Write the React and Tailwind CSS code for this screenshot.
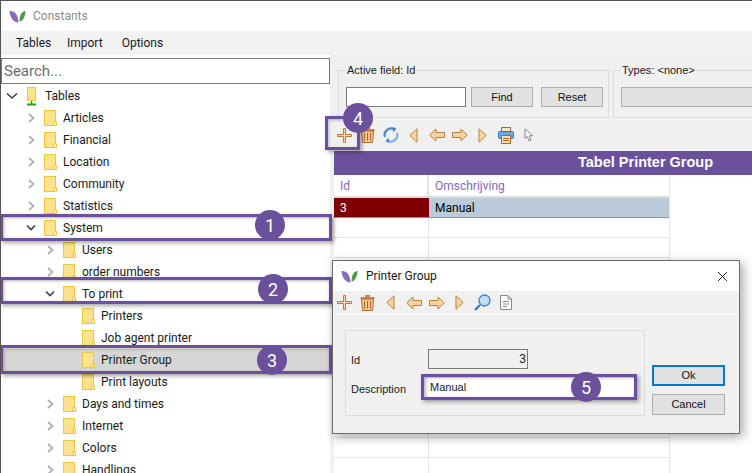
import React from 'react';
import { X } from 'lucide-react';

// sidebar tree, level decides the indent
const tree = [
  { label: 'Tables', level: 0, open: true, root: true },
  { label: 'Articles', level: 1 },
  { label: 'Financial', level: 1 },
  { label: 'Location', level: 1 },
  { label: 'Community', level: 1 },
  { label: 'Statistics', level: 1 },
  { label: 'System', level: 1, open: true },
  { label: 'Users', level: 2 },
  { label: 'order numbers', level: 2 },
  { label: 'To print', level: 2, open: true },
  { label: 'Printers', level: 3, leaf: true },
  { label: 'Job agent printer', level: 3, leaf: true },
  { label: 'Printer Group', level: 3, leaf: true, selected: true },
  { label: 'Print layouts', level: 3, leaf: true },
  { label: 'Days and times', level: 2 },
  { label: 'Internet', level: 2 },
  { label: 'Colors', level: 2 },
  { label: 'Handlings', level: 2 },
];

const indent = ['pl-[3px]', 'pl-[22px]', 'pl-[41px]', 'pl-[60px]'];

const Logo = () => (
  <svg width="17" height="13" viewBox="0 0 17 13">
    <path d="M0.5 1 C5 0.5 9 3.5 9.5 12.5 C5 12.5 1 8 0.5 1 Z" fill="#8a6bb5" />
    <path d="M16.5 1 C12.5 1.5 10.5 5 10.5 11.5 C14 11 16.5 6.5 16.5 1 Z" fill="#4f9e45" />
  </svg>
);

const Folder = () => (
  <svg width="13" height="16" viewBox="0 0 13 16">
    <rect x="0.5" y="0.5" width="11" height="15" fill="#fde28e" stroke="#f0c63c" />
    <path d="M10 15.5 V11.5 H12.5 V15.5 Z" fill="#fff3c4" stroke="#f0c63c" />
  </svg>
);

const RootFolder = () => (
  <svg width="11" height="19" viewBox="0 0 11 19">
    <rect x="1.5" y="0.5" width="8" height="13" fill="#fde28e" stroke="#f0c63c" />
    <path d="M5.5 14 V17" stroke="#18a818" strokeWidth="1.5" />
    <path d="M1 17.5 H10" stroke="#18a818" strokeWidth="2" />
  </svg>
);

const Chevron = ({ open, root }) => (
  <svg width="16" height="12" viewBox="0 0 16 12">
    {open ? (
      <path d={root ? 'M3 3.5 L8 8 L13 3.5' : 'M4 3.5 L8 7.5 L12 3.5'} fill="none" stroke="#404040" strokeWidth="1.6" />
    ) : (
      <path d="M6 2 L10.5 6 L6 10" fill="none" stroke="#b0b0b0" strokeWidth="1.7" />
    )}
  </svg>
);

const Plus = () => (
  <svg width="15" height="15" viewBox="0 0 15 15">
    <path d="M6.5 0.5 H8.5 V6.5 H14.5 V8.5 H8.5 V14.5 H6.5 V8.5 H0.5 V6.5 H6.5 Z" fill="#fbd9ae" stroke="#c07a38" />
  </svg>
);

const Trash = () => (
  <svg width="15" height="16" viewBox="0 0 15 16">
    <path d="M5 1 H10 M0.5 3 H14.5" stroke="#b5672a" strokeWidth="1.4" fill="none" />
    <path d="M1.5 4 H13.5 L12.5 15.5 H2.5 Z" fill="#f6c48f" stroke="#b5672a" />
    <path d="M4.5 6 V13.5 M7.5 6 V13.5 M10.5 6 V13.5" stroke="#b5672a" />
  </svg>
);

const Refresh = () => (
  <svg width="16" height="16" viewBox="0 0 16 16" fill="none">
    <path d="M2 10 A6.3 6.3 0 0 1 11 2.4" stroke="#4a86c8" strokeWidth="2.2" />
    <path d="M14 6 A6.3 6.3 0 0 1 5 13.6" stroke="#7fb0e2" strokeWidth="2.2" />
    <path d="M9.5 0 L13.5 1.5 L10.5 5.5 Z" fill="#4a86c8" />
    <path d="M6.5 16 L2.5 14.5 L5.5 10.5 Z" fill="#4a86c8" />
  </svg>
);

const TriLeft = () => (
  <svg width="9" height="15" viewBox="0 0 9 15">
    <path d="M8 0.8 V14.2 L0.8 7.5 Z" fill="#fcd3a0" stroke="#b5843a" />
  </svg>
);

const TriRight = () => (
  <svg width="9" height="15" viewBox="0 0 9 15">
    <path d="M1 0.8 V14.2 L8.2 7.5 Z" fill="#fcd3a0" stroke="#b5843a" />
  </svg>
);

const ArrowLeft = () => (
  <svg width="16" height="14" viewBox="0 0 16 14">
    <path d="M0.8 7 L7 1 V4.5 H15.5 V9.5 H7 V13 Z" fill="#fcd3a0" stroke="#b5843a" />
  </svg>
);

const ArrowRight = () => (
  <svg width="16" height="14" viewBox="0 0 16 14">
    <path d="M15.2 7 L9 1 V4.5 H0.5 V9.5 H9 V13 Z" fill="#fcd3a0" stroke="#b5843a" />
  </svg>
);

const Printer = () => (
  <svg width="16" height="17" viewBox="0 0 16 17">
    <rect x="3.5" y="0.5" width="9" height="5" fill="#fbe3c6" stroke="#b5672a" />
    <rect x="0.5" y="4.5" width="15" height="7" rx="1" fill="#6ea8e4" stroke="#3a78bc" />
    <rect x="3.5" y="8.5" width="9" height="8" fill="#fbe3c6" stroke="#b5672a" />
    <path d="M5 11.5 H11 M5 13.5 H11" stroke="#b5672a" />
  </svg>
);

const Pointer = () => (
  <svg width="10" height="14" viewBox="0 0 10 14">
    <path d="M1 0.8 V10.5 L3.4 8.5 L5.2 13 L7 12.2 L5.3 7.8 L8.8 7.8 Z" fill="#f6f6f6" stroke="#8c8c8c" />
  </svg>
);

const Magnifier = () => (
  <svg width="17" height="17" viewBox="0 0 17 17">
    <path d="M1 16 L6 11" stroke="#3a6fc0" strokeWidth="2.2" />
    <circle cx="10.5" cy="6.5" r="5.5" fill="#bfe0f8" stroke="#3f7fcc" strokeWidth="1.3" />
  </svg>
);

const Doc = () => (
  <svg width="12" height="15" viewBox="0 0 12 15" fill="none">
    <path d="M0.5 0.5 H8 L11.5 4 V14.5 H0.5 Z M8 0.5 V4 H11.5" fill="#fff" stroke="#8a8a8a" />
    <path d="M3 6.5 H9 M3 9 H9 M3 11.5 H7" stroke="#8a8a8a" />
  </svg>
);

const ToolSlot = ({ children }) => (
  <div className="w-[23px] h-full flex items-center justify-center shrink-0">{children}</div>
);

const Badge = ({ n, className }) => (
  <div className={`absolute w-[30px] h-[30px] rounded-full bg-[#6b509b] text-white text-[18px] flex items-center justify-center ${className}`}>
    {n}
  </div>
);

const Highlight = ({ className }) => (
  <div className={`absolute border-[3px] border-[#6b509b] shadow-[2px_2px_4px_rgba(0,0,0,0.35),inset_1px_1px_3px_rgba(0,0,0,0.3)] ${className}`} />
);

const WinButton = ({ children, className }) => (
  <div className={`bg-[#e1e1e1] border border-[#adadad] flex items-center justify-center text-[11px] font-['Liberation_Sans',sans-serif] text-[#111] ${className}`}>
    {children}
  </div>
);

export default function App() {
  return (
    <div className="relative w-[752px] h-[473px] overflow-hidden bg-white font-['Roboto',sans-serif] text-[12px] text-[#1a1a1a] border-l border-t border-[#555]">
      {/* title bar */}
      <div className="h-[30px] flex items-center pl-[8px] gap-[7px] bg-white">
        <Logo />
        <span className="text-[#8c8c8c]">Constants</span>
      </div>

      {/* menu */}
      <div className="h-[24px] flex items-center bg-[#f2f2f2] pl-[15px] gap-[19px]">
        <span className="w-[32px]">Tables</span>
        <span>Import</span>
        <span>Options</span>
      </div>

      <div className="flex h-[418px]">
        {/* left tree */}
        <div className="w-[329px] shrink-0 bg-white overflow-hidden pt-[3px]">
          <div className="h-[26px] border border-[#7a7a7a] flex items-center pl-[2px] mb-[1px] text-[15px] text-[#6d6d6d]">Search...</div>
          {tree.map((row) => (
            <div
              key={row.label}
              className={`h-[22px] flex items-center ${indent[row.level]} ${row.selected ? 'bg-[#d6d6d6]' : ''}`}
            >
              <div className="w-[16px] shrink-0 flex items-center justify-center">
                {!row.leaf && <Chevron open={row.open} root={row.root} />}
              </div>
              <div className={row.root ? 'ml-[6px] mr-[8px] flex' : 'ml-[5px] mr-[6px] flex'}>
                {row.root ? <RootFolder /> : <Folder />}
              </div>
              <span className="whitespace-nowrap">{row.label}</span>
            </div>
          ))}
        </div>

        {/* right side */}
        <div className="flex-1 min-w-0 flex flex-col bg-[#f0f0f0] pt-[8px] overflow-hidden">
          <div className="flex pl-[8px] gap-[4px] h-[56px] shrink-0 font-['Liberation_Sans',sans-serif]">
            <fieldset className="w-[271px] h-[55px] shrink-0 border border-[#dcdcdc] pl-[7px] pr-[5px]">
              <legend className="px-[1px] text-[11px] leading-[14px]">Active field: Id</legend>
              <div className="flex mt-[10px] gap-[5px]">
                <div className="w-[120px] h-[20px] bg-white border border-[#7a7a7a]" />
                <WinButton className="w-[62px] h-[20px]">Find</WinButton>
                <WinButton className="w-[62px] h-[20px] ml-[3px]">Reset</WinButton>
              </div>
            </fieldset>
            <fieldset className="w-[200px] h-[55px] shrink-0 border border-[#dcdcdc] pl-[7px]">
              <legend className="px-[1px] text-[11px] leading-[14px]">Types: &lt;none&gt;</legend>
              <div className="mt-[10px] h-[20px] w-[190px] bg-[#e1e1e1] border border-[#adadad]" />
            </fieldset>
          </div>

          {/* toolbar */}
          <div className="h-[32px] shrink-0 flex items-center pl-[3px]">
            <ToolSlot><Plus /></ToolSlot>
            <ToolSlot><Trash /></ToolSlot>
            <ToolSlot><Refresh /></ToolSlot>
            <ToolSlot><TriLeft /></ToolSlot>
            <ToolSlot><ArrowLeft /></ToolSlot>
            <ToolSlot><ArrowRight /></ToolSlot>
            <ToolSlot><TriRight /></ToolSlot>
            <ToolSlot><Printer /></ToolSlot>
            <ToolSlot><Pointer /></ToolSlot>
          </div>

          {/* table title */}
          <div className="ml-[4px] h-[24px] shrink-0 bg-[#6b509b] text-white font-['Liberation_Sans',sans-serif] font-bold text-[14.5px] flex items-center pl-[244px] whitespace-nowrap">
            Tabel Printer Group
          </div>

          {/* grid */}
          <div className="ml-[4px] flex-1 bg-white overflow-hidden">
            <div className="w-[336px] border-r border-[#e4e4e4]">
              <div className="h-[23px] flex border-b-2 border-[#dcdcdc] text-[#8a66b8]">
                <div className="w-[95px] pl-[6px] border-r-2 border-[#e4e4e4] flex items-center">Id</div>
                <div className="flex-1 pl-[6px] flex items-center">Omschrijving</div>
              </div>
              <div className="h-[20px] flex border-b border-[#8496a8]">
                <div className="w-[95px] pl-[6px] bg-[#800000] text-white flex items-center">3</div>
                <div className="flex-1 pl-[6px] bg-[#bccbd9] text-black flex items-center">Manual</div>
              </div>
              {Array.from({ length: 13 }).map((_, i) => (
                <div key={i} className="h-[20px] flex border-b border-[#e4e4e4]">
                  <div className="w-[95px] border-r border-[#e4e4e4]" />
                  <div className="flex-1" />
                </div>
              ))}
            </div>
          </div>
        </div>
      </div>

      {/* callouts over the page */}
      <Highlight className="left-[-1px] top-[213px] w-[332px] h-[27px]" />
      <Badge n="1" className="left-[254px] top-[209px]" />
      <Highlight className="left-[-1px] top-[276px] w-[332px] h-[27px]" />
      <Badge n="2" className="left-[257px] top-[273px]" />
      <Highlight className="left-[-1px] top-[344px] w-[332px] h-[29px]" />
      <Badge n="3" className="left-[256px] top-[344px]" />
      <Highlight className="left-[324px] top-[115px] w-[35px] h-[34px]" />
      <Badge n="4" className="left-[342px] top-[102px]" />

      {/* dialog */}
      <div className="absolute left-[331px] top-[259px] w-[408px] h-[174px] bg-[#f0f0f0] border border-[#6e6e6e] shadow-[3px_3px_10px_rgba(0,0,0,0.35)]">
        <div className="h-[30px] bg-white flex items-center pl-[8px] pr-[8px]">
          <Logo />
          <span className="ml-[8px]">Printer Group</span>
          <X size={17} strokeWidth={1.3} className="ml-auto text-[#111]" />
        </div>
        <div className="h-[24px] flex items-center border-b border-white">
          <ToolSlot><Plus /></ToolSlot>
          <ToolSlot><Trash /></ToolSlot>
          <ToolSlot><TriLeft /></ToolSlot>
          <ToolSlot><ArrowLeft /></ToolSlot>
          <ToolSlot><ArrowRight /></ToolSlot>
          <ToolSlot><TriRight /></ToolSlot>
          <ToolSlot><Magnifier /></ToolSlot>
          <ToolSlot><Doc /></ToolSlot>
        </div>
        <div className="flex pl-[12px] pt-[15px] font-['Liberation_Sans',sans-serif] text-[11px]">
          <div className="w-[300px] h-[86px] border border-[#dcdcdc] pl-[5px] pt-[18px] shrink-0">
            <div className="flex items-center h-[20px]">
              <span className="w-[77px] pt-[2px]">Id</span>
              <div className="w-[100px] h-[20px] border border-[#7a7a7a] flex items-center justify-end pr-[1px] text-[12px]">3</div>
            </div>
            <div className="flex items-center h-[20px] mt-[9px]">
              <span className="w-[77px] pt-[2px]">Description</span>
              <div className="w-[206px] h-[20px] bg-white flex items-start pl-[2px] pt-[1px] leading-[16px]">Manual</div>
            </div>
          </div>
          <div className="ml-[7px] pt-[35px] flex flex-col gap-[8px]">
            <WinButton className="w-[73px] h-[21px] !border-2 !border-[#0078d7]">Ok</WinButton>
            <WinButton className="w-[73px] h-[21px]">Cancel</WinButton>
          </div>
        </div>
      </div>
      <Highlight className="left-[420px] top-[373px] w-[216px] h-[26px]" />
      <Badge n="5" className="left-[570px] top-[371px]" />
    </div>
  );
}
